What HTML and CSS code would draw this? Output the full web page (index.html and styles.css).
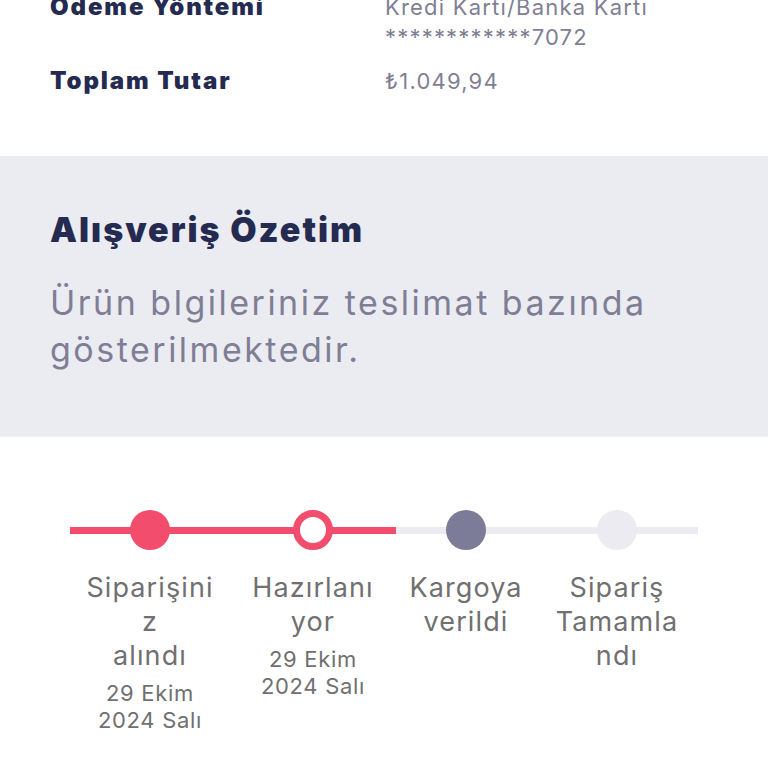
FILE: index.html
```html
<!DOCTYPE html>
<html lang="tr">
<head>
<meta charset="utf-8">
<link rel="stylesheet" href="styles.css">
</head>
<body>
<main class="page">
  <section class="info">
    <div class="row">
      <div class="label">Ödeme Yöntemi</div>
      <div class="value">Kredi Kartı/Banka Kartı<br>************7072</div>
    </div>
    <div class="row">
      <div class="label">Toplam Tutar</div>
      <div class="value">₺1.049,94</div>
    </div>
  </section>

  <section class="summary">
    <h2 class="summary-title">Alışveriş Özetim</h2>
    <p class="summary-text">Ürün blgileriniz teslimat bazında gösterilmektedir.</p>
  </section>

  <section class="tracker">
    <div class="steps">
      <div class="step done">
        <div class="head"><span class="dot dot-filled"></span></div>
        <div class="step-label">Siparişini<br>z<br>alındı</div>
        <div class="step-date">29 Ekim<br>2024 Salı</div>
      </div>
      <div class="step done">
        <div class="head"><span class="dot dot-ring"></span></div>
        <div class="step-label">Hazırlanı<br>yor</div>
        <div class="step-date">29 Ekim<br>2024 Salı</div>
      </div>
      <div class="step">
        <div class="head"><span class="dot dot-next"></span></div>
        <div class="step-label">Kargoya<br>verildi</div>
      </div>
      <div class="step">
        <div class="head"><span class="dot dot-todo"></span></div>
        <div class="step-label">Sipariş<br>Tamamla<br>ndı</div>
      </div>
    </div>
  </section>
</main>
</body>
</html>
```

FILE: styles.css
```css
* { box-sizing: border-box; }
html, body { margin: 0; padding: 0; background: #ffffff; }
body {
  width: 768px;
  height: 768px;
  overflow: hidden;
  font-family: "Inter", "Liberation Sans", sans-serif;
}
.page { display: flex; flex-direction: column; }

/* top info rows */
.info {
  margin-top: -8px;
  padding: 0 50px 0 50px;
  height: 164px;
  display: flex;
  flex-direction: column;
  gap: 14px;
}
.row {
  display: grid;
  grid-template-columns: 335px 1fr;
}
.label {
  font-weight: 900;
  font-size: 24px;
  line-height: 30px;
  letter-spacing: 1.9px;
  color: #252a50;
}
.value {
  font-size: 22px;
  line-height: 30px;
  letter-spacing: 1.2px;
  color: #7f7f94;
}

/* summary */
.summary {
  background: #ebecf1;
  height: 281px;
  padding: 56px 50px 0 50px;
}
.summary-title {
  margin: 0;
  font-size: 34px;
  font-weight: 900;
  line-height: 36px;
  letter-spacing: 2px;
  color: #252a50;
}
.summary-text {
  margin: 31px 0 0 0;
  font-size: 34px;
  line-height: 47px;
  letter-spacing: 2.5px;
  color: #7f7e95;
}

/* tracker */
.tracker { padding: 73px 70px 0 70px; }
.steps {
  display: grid;
  grid-template-columns: 160px 166px 140px 162px;
}
.step {
  display: flex;
  flex-direction: column;
  align-items: center;
  text-align: center;
}
.head {
  width: 100%;
  height: 40px;
  display: flex;
  justify-content: center;
  align-items: center;
  background: linear-gradient(#ebebf1, #ebebf1) center / 100% 7px no-repeat;
}
.done .head {
  background: linear-gradient(#f24d6d, #f24d6d) center / 100% 7px no-repeat;
}
.dot {
  width: 40px;
  height: 40px;
  border-radius: 50%;
}
.dot-filled { background: #f24d6d; }
.dot-ring { background: #ffffff; border: 7px solid #f24d6d; }
.dot-next { background: #7d7c98; }
.dot-todo { background: #ebebf1; }

.step-label {
  margin-top: 21px;
  font-size: 27px;
  line-height: 34px;
  letter-spacing: 1.1px;
  color: #707070;
}
.step-date {
  margin-top: 7px;
  font-size: 22px;
  line-height: 27px;
  letter-spacing: 0.7px;
  color: #707070;
}
```
